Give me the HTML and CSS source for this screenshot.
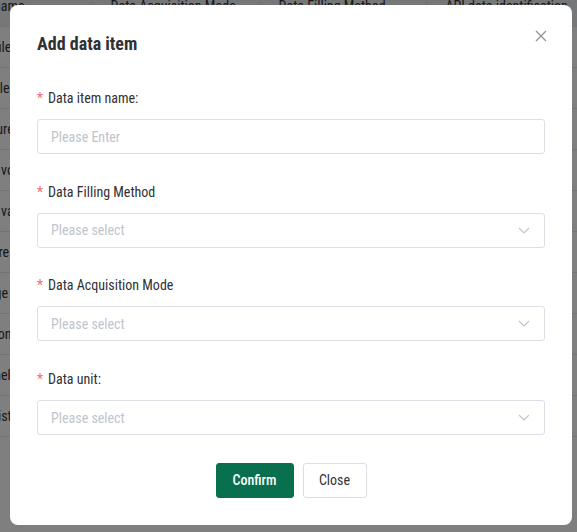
FILE: index.html
```html
<!DOCTYPE html>
<html lang="en">
<head>
  <meta charset="UTF-8">
  <meta name="viewport" content="width=device-width, initial-scale=1.0">
  <title>Data items</title>
  <link rel="stylesheet" href="styles.css">
</head>
<body>
  <!-- 데이터 항목 목록 -->
  <div class="table-wrap">
    <table class="item-table">
      <thead>
        <tr>
          <th>Item name</th>
          <th>Data Acquisition Mode</th>
          <th>Data Filling Method</th>
          <th>API data identification</th>
        </tr>
      </thead>
      <tbody>
        <tr><td>Data file</td><td>Manual</td><td>Manual input</td><td>data_file</td></tr>
        <tr><td>Test file</td><td>Manual</td><td>Manual input</td><td>test_file</td></tr>
        <tr><td>Measure unit</td><td>Interface</td><td>Automatic</td><td>measure</td></tr>
        <tr><td>Rated voltage</td><td>Interface</td><td>Automatic</td><td>rated_v</td></tr>
        <tr><td>Rated value</td><td>Interface</td><td>Automatic</td><td>rated_val</td></tr>
        <tr><td>Capture</td><td>Manual</td><td>Manual input</td><td>capture</td></tr>
        <tr><td>Voltage</td><td>Manual</td><td>Manual input</td><td>voltage</td></tr>
        <tr><td>Position</td><td>Interface</td><td>Automatic</td><td>position</td></tr>
        <tr><td>Channel</td><td>Interface</td><td>Automatic</td><td>channel</td></tr>
        <tr><td>Data list</td><td>Manual</td><td>Manual input</td><td>data_list</td></tr>
      </tbody>
    </table>
  </div>

  <div class="mask"></div>

  <!-- 데이터 항목 추가 창 -->
  <div class="dialog">
    <h2 class="dialog-title">Add data item</h2>
    <button class="dialog-close" aria-label="Close">
      <svg width="12" height="12" viewBox="0 0 12 12"><path d="M1 1 L11 11 M11 1 L1 11" stroke="#909399" stroke-width="1.3" fill="none"/></svg>
    </button>

    <form class="form">
      <div class="form-item">
        <label class="form-label"><span class="req">*</span>Data item name:</label>
        <input class="form-input" type="text" placeholder="Please Enter">
      </div>
      <div class="form-item">
        <label class="form-label"><span class="req">*</span>Data Filling Method</label>
        <div class="form-select">
          <span class="placeholder">Please select</span>
          <svg class="arrow" width="12" height="7" viewBox="0 0 12 7"><path d="M1 1 L6 6 L11 1" stroke="#c0c4cc" stroke-width="1.1" fill="none"/></svg>
        </div>
      </div>
      <div class="form-item">
        <label class="form-label"><span class="req">*</span>Data Acquisition Mode</label>
        <div class="form-select">
          <span class="placeholder">Please select</span>
          <svg class="arrow" width="12" height="7" viewBox="0 0 12 7"><path d="M1 1 L6 6 L11 1" stroke="#c0c4cc" stroke-width="1.1" fill="none"/></svg>
        </div>
      </div>
      <div class="form-item">
        <label class="form-label"><span class="req">*</span>Data unit:</label>
        <div class="form-select">
          <span class="placeholder">Please select</span>
          <svg class="arrow" width="12" height="7" viewBox="0 0 12 7"><path d="M1 1 L6 6 L11 1" stroke="#c0c4cc" stroke-width="1.1" fill="none"/></svg>
        </div>
      </div>
    </form>

    <div class="dialog-footer">
      <button class="btn btn-primary">Confirm</button>
      <button class="btn btn-default">Close</button>
    </div>
  </div>
</body>
</html>
```

FILE: styles.css
```css
body {
  margin: 0;
  overflow: hidden;
  background: #fff;
  font-family: "Roboto Condensed", Roboto, "Liberation Sans", sans-serif;
  font-stretch: condensed;
  color: #303133;
}

/* 목록 테이블 (가로로 스크롤된 상태) */
.table-wrap {
  margin-left: -80px;
  margin-top: -13px;
}

.item-table {
  border-collapse: collapse;
  table-layout: fixed;
  width: 686px;
  font-size: 14px;
  color: #333;
}

.item-table th,
.item-table td {
  box-sizing: border-box;
  text-align: left;
  padding: 0 18px 0 19px;
  height: 41px;
  border-bottom: 1px solid #e4e7ed;
  white-space: nowrap;
  overflow: hidden;
}

.item-table th {
  height: 39px;
  font-weight: normal;
  background: #eceef1;
  border-right: 1px solid #dcdfe6;
}

.item-table th:first-child,
.item-table td:first-child {
  padding-left: 46px;
}

.item-table th:nth-child(1) { width: 171px; }
.item-table th:nth-child(2) { width: 168px; }
.item-table th:nth-child(3) { width: 167px; }
.item-table th:nth-child(4) { width: 180px; }

/* 어두운 배경 */
.mask {
  position: fixed;
  inset: 0;
  background: rgba(0, 0, 0, 0.5);
}

/* 창 스타일 */
.dialog {
  position: fixed;
  top: 5px;
  left: 10px;
  width: 562px;
  box-sizing: border-box;
  padding: 27px;
  background: #fff;
  border-radius: 8px;
}

.dialog-title {
  margin: 0;
  font-size: 18px;
  line-height: 24px;
  font-weight: bold;
  color: #303133;
}

.dialog-close {
  position: absolute;
  top: 25px;
  right: 25px;
  width: 12px;
  height: 12px;
  padding: 0;
  border: none;
  background: none;
  cursor: pointer;
  display: flex;
}

.form {
  margin-top: 32px;
}

.form-item {
  margin-bottom: 27.7px;
}

.form-label {
  display: block;
  font-size: 14px;
  line-height: 20px;
  margin-bottom: 11px;
  color: #303133;
}

.req {
  color: #f56c6c;
  margin-right: 5px;
}

.form-input,
.form-select {
  display: flex;
  align-items: center;
  width: 100%;
  height: 35px;
  box-sizing: border-box;
  padding: 0 13px;
  border: 1px solid #dcdfe6;
  border-radius: 3px;
  background: #fff;
  font-family: inherit;
  font-stretch: condensed;
  font-size: 14px;
  color: #303133;
  outline: none;
}

.form-input::placeholder,
.placeholder {
  color: #c0c4cc;
}

.form-select {
  justify-content: space-between;
  padding-right: 14px;
}

/* 버튼 */
.dialog-footer {
  display: flex;
  justify-content: center;
  gap: 9px;
}

.btn {
  height: 35px;
  border-radius: 3px;
  font-family: inherit;
  font-stretch: condensed;
  font-size: 14px;
  cursor: pointer;
}

.btn-primary {
  width: 78px;
  background: #08704f;
  border: 1px solid #08704f;
  color: #fff;
  font-weight: 500;
}

.btn-default {
  width: 64px;
  background: #fff;
  border: 1px solid #dcdfe6;
  color: #303133;
}
```
